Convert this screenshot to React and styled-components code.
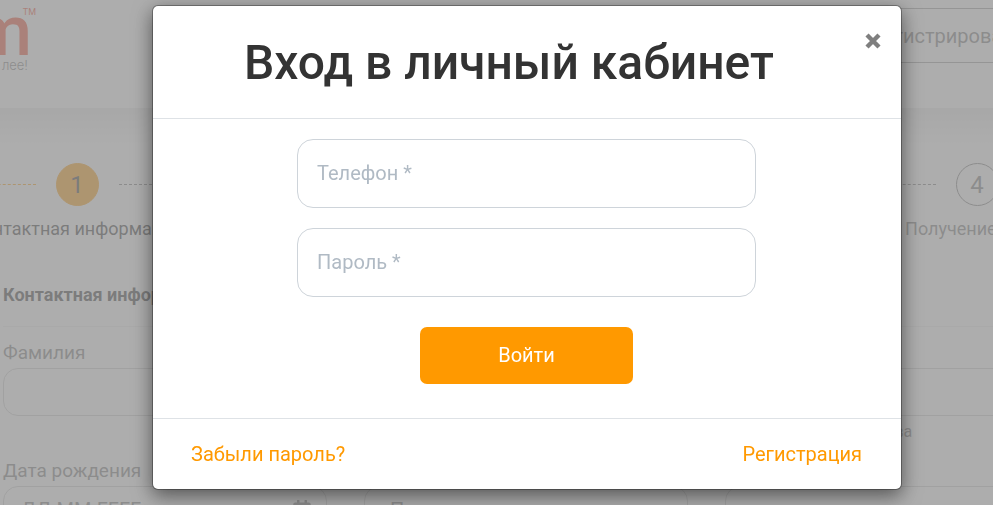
import React from 'react';
import styled, { createGlobalStyle } from 'styled-components';
import { FaRegCalendarAlt } from 'react-icons/fa';

const GlobalStyle = createGlobalStyle`
  * {
    box-sizing: border-box;
  }
  body {
    margin: 0;
    background: #fff;
    color: #333;
    font-family: Roboto, "Liberation Sans", sans-serif;
    font-size: 20px;
    line-height: 28px;
  }
  input, button, select {
    font: inherit;
  }
`

let Page = styled.div`
  height: 100vh;
  overflow: hidden;
`
let Header = styled.header`
  display: flex;
  justify-content: space-between;
  align-items: flex-start;
  height: 108px;
  padding-top: 8px;
`
let Logo = styled.a`
  display: flex;
  flex-direction: column;
  align-items: flex-end;
  width: 36px;
  color: #777;
  text-decoration: none;
  white-space: nowrap;
`
let LogoMark = styled.span`
  font-size: 9px;
  line-height: 8px;
  color: #f04a2c;
`
let LogoName = styled.span`
  padding-right: 4px;
  font-size: 70px;
  font-weight: 500;
  line-height: 30px;
  color: #f04a2c;
`
let LogoTagline = styled.span`
  padding: 13px 8px 0 0;
  font-family: Inter, sans-serif;
  font-size: 13px;
  font-weight: 300;
  line-height: 12px;
`
let RegisterButton = styled.button`
  flex: none;
  width: 268px;
  height: 55px;
  margin-right: -88px;
  border: 1px solid #999;
  border-radius: 8px;
  background: none;
  color: #777;
`
let Main = styled.main`
  padding-top: 55px;
  background: linear-gradient(#e8e8e8, #fff 40px);
`
let Steps = styled.ol`
  display: grid;
  grid-template-columns: repeat(4, 300px);
  margin: 0 0 0 -73px;
  padding: 0;
  list-style: none;
`
let Step = styled.li`
  color: ${props => props.$active ? '#333' : '#777'};
  font-size: 18px;
  text-align: center;
`
let StepLine = styled.div`
  display: flex;
  align-items: center;
  gap: 20px;
  margin-bottom: 9px;

  &::before, &::after {
    content: '';
    flex: 1;
    border-top: 1px dashed #777;
  }
  &::before {
    border-color: ${props => props.$active ? '#ff9900' : '#777'};
  }
`
let StepNumber = styled.span`
  width: 43px;
  height: 43px;
  border: 1px solid ${props => props.$active ? '#ff9900' : '#777'};
  border-radius: 50%;
  background: ${props => props.$active ? '#ff9900' : 'none'};
  font-size: 24px;
  line-height: 42px;
`
let Form = styled.form`
  padding: 38px 0 0 3px;
`
let SectionTitle = styled.h2`
  margin: 0;
  padding-bottom: 17px;
  border-bottom: 1px solid #eee;
  font-size: 18px;
  font-weight: 700;
  line-height: 28px;
`
let Fields = styled.div`
  display: grid;
  grid-template-columns: repeat(3, 324px);
  grid-auto-rows: 118px;
  column-gap: 37px;
  padding-top: 12px;
`
let Field = styled.div`
  display: flex;
  flex-direction: column;
`
let FieldLabel = styled.label`
  padding-bottom: 2px;
  color: #777;
  font-size: 19px;
  line-height: 27px;
`
let FieldBox = styled.div`
  display: flex;
  align-items: center;
  height: 48px;
  padding: 0 14px 0 17px;
  border: 1px solid #ccc;
  border-radius: 15px;
  color: #777;
`
let fieldControl = `
  flex: 1;
  min-width: 0;
  padding: 0;
  border: 0;
  outline: 0;
  background: none;
  color: #777;
`
let FieldInput = styled.input`
  ${fieldControl}
  &::placeholder {
    color: #777;
  }
`
let FieldSelect = styled.select`
  ${fieldControl}
  appearance: none;
  padding-left: 8px;
`
let Hint = styled.small`
  padding-left: 88px;
  color: #777;
  font-size: 16px;
  line-height: 32px;
`

let Backdrop = styled.div`
  position: fixed;
  inset: 0;
  padding: 5px 91px 15px 152px;
  background: rgba(147, 147, 147, 0.76);
`
let Dialog = styled.div`
  border: 1px solid rgba(0, 0, 0, 0.3);
  border-radius: 6px;
  background: #fff;
  background-clip: padding-box;
  box-shadow: 0 6px 19px rgba(0, 0, 0, 0.5);
`
let DialogHeader = styled.div`
  display: flex;
  align-items: flex-start;
  padding: 21px 20px 19px;
  border-bottom: 1px solid #dee2e6;
`
let DialogTitle = styled.h1`
  flex: 1;
  margin: 0;
  font-size: 48px;
  font-weight: 500;
  line-height: 72px;
  text-align: center;
`
let CloseButton = styled.button`
  display: flex;
  padding: 6px 0 0 20px;
  border: 0;
  background: none;
  color: #7f7f7f;
  cursor: pointer;
`
let LoginForm = styled.form`
  display: flex;
  flex-direction: column;
  align-items: center;
  gap: 20px;
  padding: 20px 145px 34px 144px;
`
let LoginInput = styled.input`
  width: 100%;
  height: 69px;
  padding: 0 19px 2px;
  border: 1px solid #ced4da;
  border-radius: 16px;
  outline: 0;
  background: #fff;
  color: #333;

  &::placeholder {
    color: #b0bac4;
    opacity: 1;
  }
`
let LoginButton = styled.button`
  width: 213px;
  height: 57px;
  margin-top: 10px;
  padding: 0 0 2px;
  border: 0;
  border-radius: 7px;
  background: #ff9900;
  color: #fff;
  cursor: pointer;
`
let DialogFooter = styled.div`
  display: flex;
  justify-content: space-between;
  padding: 21px 39px 21px 38px;
  border-top: 1px solid #dee2e6;
`
let FooterLink = styled.a`
  color: #ff9900;
  text-decoration: none;

  &:hover {
    text-decoration: underline;
  }
`

const steps = [
  'Контактная информация',
  'Паспортные данные',
  'Место работы',
  'Получение денег'
]

const CloseIcon = () => (
  <svg width="16" height="16" viewBox="0 0 16 16" aria-hidden="true">
    <path d="M2 2L14 14M14 2L2 14" stroke="currentColor" strokeWidth="4.4" />
  </svg>
)

const LoginDialog = () => (
  <Backdrop>
    <Dialog role="dialog" aria-modal="true" aria-labelledby="login-title">
      <DialogHeader>
        <DialogTitle id="login-title">Вход в личный кабинет</DialogTitle>
        <CloseButton type="button" aria-label="Закрыть">
          <CloseIcon />
        </CloseButton>
      </DialogHeader>
      <LoginForm>
        <LoginInput type="tel" placeholder="Телефон *" aria-label="Телефон" />
        <LoginInput type="password" placeholder="Пароль *" aria-label="Пароль" />
        <LoginButton type="submit">Войти</LoginButton>
      </LoginForm>
      <DialogFooter>
        <FooterLink href="#forgot">Забыли пароль?</FooterLink>
        <FooterLink href="#register">Регистрация</FooterLink>
      </DialogFooter>
    </Dialog>
  </Backdrop>
)

export default function App() {
  return (
    <React.Fragment>
      <GlobalStyle />
      <Page>
        <Header>
          <Logo href="#home">
            <LogoMark>TM</LogoMark>
            <LogoName>m</LogoName>
            <LogoTagline>лее!</LogoTagline>
          </Logo>
          <RegisterButton type="button">Зарегистрироваться</RegisterButton>
        </Header>
        <Main>
          <Steps>
            {steps.map((name, i) =>
              <Step key={name} $active={i === 0}>
                <StepLine $active={i === 0}>
                  <StepNumber $active={i === 0}>{i + 1}</StepNumber>
                </StepLine>
                {name}
              </Step>
            )}
          </Steps>
          <Form>
            <SectionTitle>Контактная информация</SectionTitle>
            <Fields>
              <Field>
                <FieldLabel htmlFor="surname">Фамилия</FieldLabel>
                <FieldBox><FieldInput id="surname" /></FieldBox>
              </Field>
              <Field>
                <FieldLabel htmlFor="name">Имя</FieldLabel>
                <FieldBox><FieldInput id="name" /></FieldBox>
              </Field>
              <Field>
                <FieldLabel htmlFor="patronymic">Отчество</FieldLabel>
                <FieldBox><FieldInput id="patronymic" /></FieldBox>
                <Hint>Нет отчества</Hint>
              </Field>
              <Field>
                <FieldLabel htmlFor="birthday">Дата рождения</FieldLabel>
                <FieldBox>
                  <FieldInput id="birthday" placeholder="ДД.ММ.ГГГГ" />
                  <FaRegCalendarAlt />
                </FieldBox>
              </Field>
              <Field>
                <FieldLabel htmlFor="gender">Пол</FieldLabel>
                <FieldBox>
                  <FieldSelect id="gender"><option>Пол</option></FieldSelect>
                </FieldBox>
              </Field>
              <Field>
                <FieldLabel htmlFor="email">E-mail</FieldLabel>
                <FieldBox><FieldInput id="email" type="email" /></FieldBox>
              </Field>
            </Fields>
          </Form>
        </Main>
      </Page>
      <LoginDialog />
    </React.Fragment>
  );
}
